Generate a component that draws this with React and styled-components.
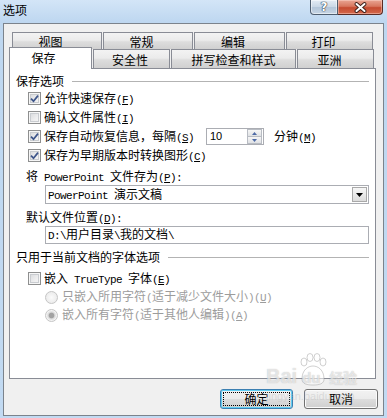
import React from 'react'
import styled, { createGlobalStyle } from 'styled-components'

const CJK = `"Noto Sans CJK SC", "Noto Sans", sans-serif`

const GlobalStyle = createGlobalStyle`
  html, body {
    margin: 0;
    padding: 0;
  }
  body {
    background: #fff;
    font-family: ${CJK};
  }
`

const Accel = ({ k }) => (
  <Latin>(<u>{k}</u>)</Latin>
)

const Check = () => (
  <svg width="9" height="9" viewBox="0 0 9 9">
    <path d="M1 4.6 L3.5 7.2 L8 1.6" fill="none" stroke="#3d558a" strokeWidth="1.7" />
  </svg>
)

const Arrow = ({ up, color = '#4d6aa5', w = 5, h = 3 }) => (
  <svg width={w} height={h} viewBox={`0 0 ${w} ${h}`}>
    <path d={up ? `M0 ${h} L${w / 2} 0 L${w} ${h}Z` : `M0 0 L${w} 0 L${w / 2} ${h}Z`} fill={color} />
  </svg>
)

const App = () => {
  return (
    <>
      <GlobalStyle />
      <Window>
        <TitleBar>
          <Title>选项</Title>
          <Caption>
            <HelpButton>?</HelpButton>
            <CloseButton>
              <svg width="13" height="11" viewBox="0 0 13 11">
                <path d="M2.5 2 L10.5 9 M10.5 2 L2.5 9" stroke="#3b1f1a" strokeWidth="3.8" strokeLinecap="round" />
                <path d="M2.5 2 L10.5 9 M10.5 2 L2.5 9" stroke="#fff" strokeWidth="2" strokeLinecap="round" />
              </svg>
            </CloseButton>
          </Caption>
        </TitleBar>
        <Frame>
          <Dialog>
            <TabRow $h={17} $indent={3}>
              <Tab $w={90} $h={17} $pr={13}>视图</Tab>
              <Tab $w={90} $h={17} $pr={13}>常规</Tab>
              <Tab $w={91} $h={17} $pr={13}>编辑</Tab>
              <Tab $w={87} $h={17} $pr={12}>打印</Tab>
            </TabRow>
            <TabRow $h={19}>
              <Tab $w={83} $h={22} $pr={14} $active>保存</Tab>
              <Tab $w={77} $h={19} $pr={3}>安全性</Tab>
              <Tab $w={125} $h={19}>拼写检查和样式</Tab>
              <Tab $w={77} $h={19} $pr={12}>亚洲</Tab>
            </TabRow>
            <Panel>
              <GroupHeader>
                <span>保存选项</span>
                <GroupLine />
              </GroupHeader>
              <OptionRow>
                <CheckBox><Check /></CheckBox>
                <Label>允许快速保存<Accel k="F" /></Label>
              </OptionRow>
              <OptionRow>
                <CheckBox />
                <Label>确认文件属性<Accel k="I" /></Label>
              </OptionRow>
              <OptionRow>
                <CheckBox><Check /></CheckBox>
                <Label $w={162}>保存自动恢复信息，每隔<Accel k="S" /></Label>
                <SpinBox>
                  <SpinValue>10</SpinValue>
                  <SpinButtons>
                    <SpinHalf><Arrow up /></SpinHalf>
                    <SpinHalf><Arrow /></SpinHalf>
                  </SpinButtons>
                </SpinBox>
                <Label $gap={10}>分钟<Accel k="M" /></Label>
              </OptionRow>
              <OptionRow>
                <CheckBox><Check /></CheckBox>
                <Label>保存为早期版本时转换图形<Accel k="C" /></Label>
              </OptionRow>
              <FieldLabel $top={3}>
                将<Latin> PowerPoint </Latin>文件存为<Accel k="P" /><Latin>:</Latin>
              </FieldLabel>
              <Select>
                <FieldText><Latin>PowerPoint </Latin>演示文稿</FieldText>
                <SelectButton><Arrow color="#000" w={7} h={4} /></SelectButton>
              </Select>
              <FieldLabel $top={5}>
                默认文件位置<Accel k="D" /><Latin>:</Latin>
              </FieldLabel>
              <TextField>
                <FieldText>
                  <Latin>{'D:\\'}</Latin>用户目录<Latin>{'\\'}</Latin>我的文档<Latin>{'\\'}</Latin>
                </FieldText>
              </TextField>
              <GroupHeader $top={5}>
                <span>只用于当前文档的字体选项</span>
                <GroupLine />
              </GroupHeader>
              <OptionRow $top={4}>
                <CheckBox />
                <Label>嵌入<Latin> TrueType </Latin>字体<Accel k="E" /></Label>
              </OptionRow>
              <RadioRow>
                <Radio />
                <Label $disabled>
                  只嵌入所用字符<Latin>(</Latin>适于减少文件大小<Latin>)</Latin><Accel k="U" />
                </Label>
              </RadioRow>
              <RadioRow>
                <Radio $checked />
                <Label $disabled>
                  嵌入所有字符<Latin>(</Latin>适于其他人编辑<Latin>)</Latin><Accel k="A" />
                </Label>
              </RadioRow>
            </Panel>
            <Footer>
              <Button $w={73} $default>确定</Button>
              <Button $w={74}>取消</Button>
            </Footer>
          </Dialog>
        </Frame>
        <Watermark>
          <WmLogo>
            <span>Bai</span>
            <Paw>
              <svg width="32" height="34" viewBox="0 0 32 34">
                <g fill="rgba(255,255,255,0.55)" stroke="rgba(150,150,150,0.45)" strokeWidth="1">
                  <ellipse cx="7" cy="9" rx="3" ry="4" />
                  <ellipse cx="13" cy="4.5" rx="3" ry="4" />
                  <ellipse cx="20" cy="4.5" rx="3" ry="4" />
                  <ellipse cx="26" cy="9" rx="3" ry="4" />
                  <path d="M5 26 C5 17 11 13 16 13 C21 13 27 17 27 26 C27 31 22 32 16 32 C10 32 5 31 5 26Z" />
                </g>
              </svg>
              <PawText>du</PawText>
            </Paw>
            <WmCn>经验</WmCn>
          </WmLogo>
          <WmUrl>jingyan.baidu.com</WmUrl>
        </Watermark>
      </Window>
    </>
  )
}

export default App


const Window = styled.div`
  position: relative;
  box-sizing: border-box;
  width: 387px;
  height: 418px;
  display: flex;
  flex-direction: column;
  overflow: hidden;
  background: linear-gradient(180deg, #d3e5f7 0px, #bed7f0 22px, #c2daf2 100%);
`
const TitleBar = styled.div`
  display: flex;
  justify-content: space-between;
  align-items: flex-start;
  height: 23px;
  flex: none;
  padding-left: 3px;
`
const Title = styled.div`
  padding-top: 2px;
  font-size: 12px;
  line-height: 16px;
  color: #000;
`
const Caption = styled.div`
  display: flex;
  margin-right: 4px;
`
const CaptionButton = styled.div`
  box-sizing: border-box;
  height: 15px;
  display: flex;
  align-items: center;
  justify-content: center;
  border: 1px solid #4f5e70;
  border-top: none;
`
const HelpButton = styled(CaptionButton)`
  width: 28px;
  border-radius: 0 0 0 4px;
  background: linear-gradient(#e4ecf5 0%, #c9d7e6 50%, #b4c6da 51%, #c6d5e4 100%);
  box-shadow: inset 0 0 0 1px rgba(255, 255, 255, 0.5);
  font: bold 12px/13px "DejaVu Sans", sans-serif;
  color: #fff;
  text-shadow: 0 0 1px #2a3442, 0 0 1px #2a3442, 0 0 1px #2a3442;
`
const CloseButton = styled(CaptionButton)`
  width: 45px;
  border-left: none;
  border-color: #5a2b24;
  border-radius: 0 0 4px 0;
  background: linear-gradient(#e9a593 0%, #d8775f 45%, #c54a30 55%, #d46a4c 100%);
  box-shadow: inset 0 0 0 1px rgba(255, 220, 210, 0.45);
`
const Frame = styled.div`
  flex: 1;
  display: flex;
  padding: 0 3px 2px 3px;
`
const Dialog = styled.div`
  flex: 1;
  display: flex;
  flex-direction: column;
  padding: 8px 7px 6px 5px;
  background: #f0f0f0;
  border: 1px solid #7b838c;
`
const TabRow = styled.div`
  display: flex;
  align-items: flex-end;
  gap: 1px;
  flex: none;
  height: ${p => p.$h}px;
  margin-left: ${p => p.$indent || 0}px;
`
const Tab = styled.div`
  box-sizing: border-box;
  flex: none;
  position: relative;
  z-index: ${p => (p.$active ? 1 : 0)};
  width: ${p => p.$w}px;
  height: ${p => p.$h}px;
  margin-bottom: ${p => (p.$active ? -1 : 0)}px;
  display: flex;
  justify-content: center;
  align-items: ${p => (p.$active ? 'flex-start' : 'center')};
  padding: ${p => (p.$active ? 2 : 0)}px ${p => p.$pr || 0}px 0 0;
  border: 1px solid #898c95;
  border-bottom: none;
  background: ${p => (p.$active
    ? '#fff'
    : 'linear-gradient(#f3f3f3 0%, #ebebeb 45%, #dddddd 55%, #d0d0d0 100%)')};
  font-size: 12px;
  line-height: 15px;
  color: #000;
  white-space: nowrap;
`
const Panel = styled.div`
  box-sizing: border-box;
  flex: none;
  height: 311px;
  display: flex;
  flex-direction: column;
  padding: 4px 6px 0 6px;
  background: #fff;
  border: 1px solid #898c95;
`
const GroupHeader = styled.div`
  display: flex;
  align-items: center;
  gap: 8px;
  height: 16px;
  margin-top: ${p => p.$top || 0}px;
  font-size: 12px;
  line-height: 16px;
  color: #000;
  white-space: nowrap;
`
const GroupLine = styled.div`
  flex: 1;
  height: 1px;
  background: #b3b3b3;
`
const OptionRow = styled.div`
  display: flex;
  align-items: center;
  height: 19px;
  margin: ${p => p.$top || 0}px 0 0 12px;
`
const RadioRow = styled.div`
  display: flex;
  align-items: center;
  gap: 4px;
  height: 18px;
  margin-left: 29px;
`
const CheckBox = styled.span`
  box-sizing: border-box;
  flex: none;
  width: 13px;
  height: 13px;
  display: flex;
  align-items: center;
  justify-content: center;
  margin-right: 3px;
  border: 1px solid #8e8f8f;
  background: linear-gradient(135deg, #d4d6d9 0%, #eeeeef 60%, #f8f8f8 100%);
  box-shadow: inset 0 0 0 1px #f6f6f6, inset 0 0 0 2px #c9ccd0;
`
const Radio = styled.span`
  box-sizing: border-box;
  flex: none;
  width: 13px;
  height: 13px;
  border-radius: 50%;
  border: 1px solid #c5c5c5;
  background: ${p => (p.$checked
    ? 'radial-gradient(circle, #a2a2a2 0 2.4px, #d6d6d6 3.2px, #f3f3f3 5px)'
    : 'radial-gradient(circle, #fbfbfb 0, #e6e6e6 100%)')};
`
const Label = styled.span`
  flex: none;
  width: ${p => (p.$w ? `${p.$w}px` : 'auto')};
  margin-left: ${p => p.$gap || 0}px;
  font-size: 12px;
  line-height: 16px;
  color: ${p => (p.$disabled ? '#9c9c9c' : '#000')};
  white-space: nowrap;
`
const Latin = styled.span`
  font-family: "Liberation Mono", monospace;
  font-size: 11px;
  letter-spacing: -0.6px;
`
const SpinBox = styled.div`
  box-sizing: border-box;
  flex: none;
  display: flex;
  align-items: center;
  width: 58px;
  height: 17px;
  padding: 0 1px 0 3px;
  border: 1px solid #abadb3;
  background: #fff;
`
const SpinValue = styled.span`
  flex: 1;
  font: 11px/15px "Liberation Sans", sans-serif;
  color: #000;
`
const SpinButtons = styled.div`
  box-sizing: border-box;
  display: flex;
  flex-direction: column;
  width: 15px;
  height: 15px;
  border: 1px solid #b8bcc3;
`
const SpinHalf = styled.div`
  flex: 1;
  display: flex;
  align-items: center;
  justify-content: center;
  background: linear-gradient(#f6f6f6, #dfe1e4);
  & + & {
    border-top: 1px solid #b8bcc3;
  }
`
const FieldLabel = styled.div`
  height: 16px;
  margin: ${p => p.$top || 0}px 0 0 10px;
  font-size: 12px;
  line-height: 16px;
  color: #000;
  white-space: nowrap;
`
const Field = styled.div`
  box-sizing: border-box;
  display: flex;
  align-items: center;
  margin: 1px 0 0 29px;
  padding-left: 2px;
  border: 1px solid #abadb3;
  background: #fff;
`
const Select = styled(Field)`
  height: 19px;
`
const TextField = styled(Field)`
  height: 18px;
`
const FieldText = styled.span`
  flex: 1;
  font-size: 12px;
  line-height: 16px;
  color: #000;
  white-space: nowrap;
`
const SelectButton = styled.span`
  box-sizing: border-box;
  width: 15px;
  height: 15px;
  margin-right: 1px;
  display: flex;
  align-items: center;
  justify-content: center;
  border: 1px solid #a9a9a9;
  background: linear-gradient(#f7f7f7, #dcdcdc);
`
const Footer = styled.div`
  display: flex;
  justify-content: flex-end;
  gap: 11px;
  margin: 10px -2px 0 0;
`
const Button = styled.button`
  box-sizing: border-box;
  position: relative;
  width: ${p => p.$w}px;
  height: 20px;
  padding: 0;
  border: 1px solid ${p => (p.$default ? '#3c7fb1' : '#707070')};
  border-radius: 3px;
  background: linear-gradient(#f2f2f2 0%, #ebebeb 50%, #dddddd 51%, #cfcfcf 100%);
  box-shadow: inset 0 0 0 1px ${p => (p.$default ? '#5fcdf3' : '#fbfbfb')};
  font-family: ${CJK};
  font-size: 12px;
  line-height: 18px;
  color: #000;

  &::after {
    content: "";
    display: ${p => (p.$default ? 'block' : 'none')};
    position: absolute;
    inset: 2px;
    border: 1px dotted #000;
  }
`
const Watermark = styled.div`
  position: absolute;
  left: 266px;
  top: 353px;
  display: flex;
  flex-direction: column;
  align-items: flex-start;
  pointer-events: none;
`
const WmLogo = styled.div`
  display: flex;
  align-items: flex-end;
  font: bold 20px/22px "Liberation Sans", sans-serif;
  color: rgba(255, 255, 255, 0.6);
  text-shadow: 0 0 1px rgba(140, 140, 140, 0.6);
`
const Paw = styled.span`
  position: relative;
  display: flex;
`
const PawText = styled.span`
  position: absolute;
  left: 5px;
  bottom: 1px;
  font-size: 15px;
  line-height: 16px;
`
const WmCn = styled.span`
  font-family: ${CJK};
  font-size: 14px;
  line-height: 20px;
`
const WmUrl = styled.span`
  margin-top: 3px;
  font: 11px/12px "Liberation Sans", sans-serif;
  color: rgba(190, 190, 190, 0.45);
`
